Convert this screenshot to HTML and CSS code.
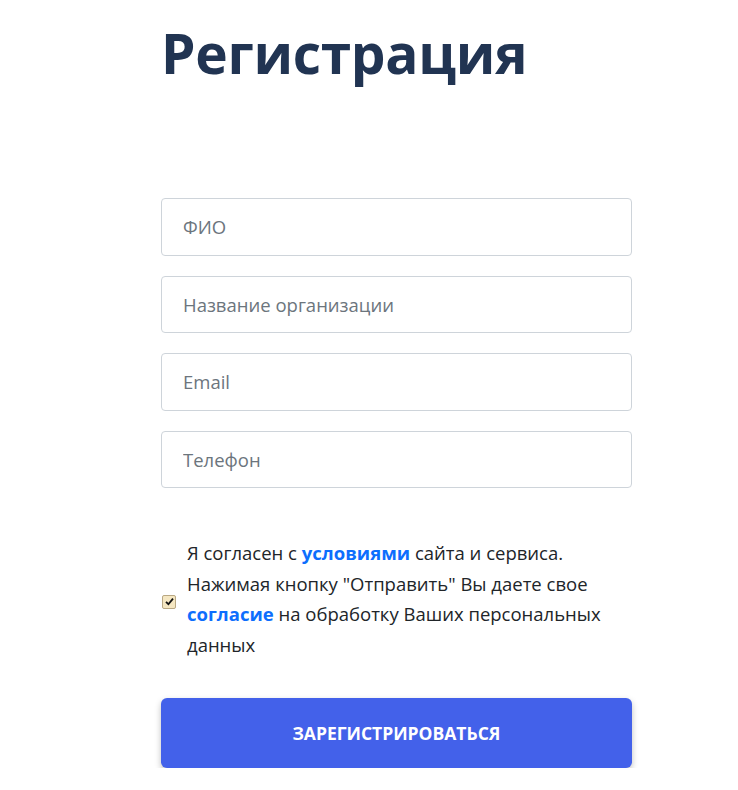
FILE: index.html
```html
<!DOCTYPE html>
<html>
<head>
<meta charset="utf-8">
<title>Регистрация</title>
<link rel="stylesheet" href="styles.css">
</head>
<body>
<div class="m-reg">
	<h1 class="title">Регистрация</h1>
	<form class="form">
		<input class="field" type="text" placeholder="ФИО">
		<input class="field" type="text" placeholder="Название организации">
		<input class="field" type="text" placeholder="Email">
		<input class="field" type="text" placeholder="Телефон">
		<label class="agree">
			<span class="check"><svg width="9" height="9" viewBox="0 0 9 9"><path d="M1 4.8 L3.4 7.2 L8 1.6" fill="none" stroke="#111" stroke-width="1.8"/></svg></span>
			<span class="agree-text">Я согласен с <a href="#">условиями</a> сайта и сервиса. Нажимая кнопку "Отправить" Вы даете свое <a href="#">согласие</a> на обработку Ваших персональных данных</span>
		</label>
		<button class="btn" type="button">Зарегистрироваться</button>
	</form>
</div>
</body>
</html>
```

FILE: styles.css
```css
*{margin:0;padding:0;box-sizing:border-box;}
body{background:#fff;font-family:"Open Sans","Noto Sans",sans-serif;color:#212529;}

.m-reg{width:471px;margin:0 0 0 161px;}
.m-reg .title{margin:14px 0 0 0;font-size:55px;line-height:78px;font-weight:700;color:#213452;letter-spacing:-0.3px;}

/** 表单 **/
.form{display:flex;flex-direction:column;gap:20px;margin-top:106px;}
.field{height:57.6px;padding:0 21px;border:1px solid #ced4da;border-radius:4px;font-family:inherit;font-size:18.5px;color:#495057;outline:none;}
.field::placeholder{color:#6c757d;}

.agree{display:flex;align-items:center;gap:11px;margin-top:30px;font-size:18.5px;line-height:30.5px;color:#212529;}
.agree a{color:#0d6efd;font-weight:700;text-decoration:none;}
.agree-text{max-width:425px;}
.check{flex:none;display:flex;align-items:center;justify-content:center;width:14px;height:14px;margin:5px 0 0 1px;background:#f5e7c2;border:1px solid #b9a883;border-radius:2px;}

.btn{height:70px;margin-top:18px;border:none;border-radius:6px;background:#4361ea;color:#fff;font-family:inherit;font-size:17.5px;font-weight:700;text-transform:uppercase;box-shadow:0 3px 6px rgba(0,0,0,.25);}
```
